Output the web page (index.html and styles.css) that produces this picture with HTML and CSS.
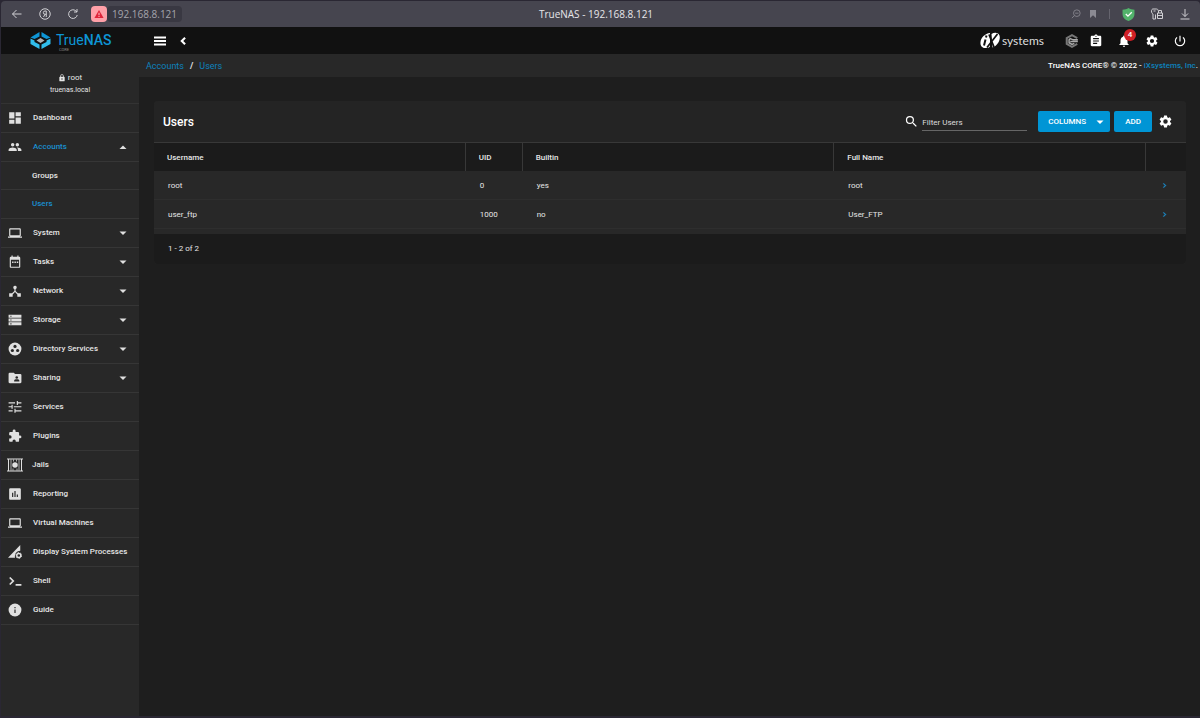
FILE: index.html
```html
<!DOCTYPE html>
<html lang="en">
<head>
<meta charset="utf-8">
<title>TrueNAS - 192.168.8.121</title>
<meta name="viewport" content="width=device-width, initial-scale=1">
<link rel="stylesheet" href="styles.css">
</head>
<body>
<svg class="defs" aria-hidden="true">
  <symbol id="gear" viewBox="0 0 24 24"><path d="M19.14 12.94c.04-.3.06-.61.06-.94 0-.32-.02-.64-.07-.94l2.03-1.58a.49.49 0 0 0 .12-.61l-1.92-3.32a.49.49 0 0 0-.59-.22l-2.39.96c-.5-.38-1.03-.7-1.62-.94l-.36-2.54a.48.48 0 0 0-.48-.41h-3.84c-.24 0-.43.17-.47.41l-.36 2.54c-.59.24-1.13.57-1.62.94l-2.39-.96a.48.48 0 0 0-.59.22L2.74 8.87c-.12.21-.08.47.12.61l2.03 1.58c-.05.3-.09.63-.09.94s.02.64.07.94l-2.03 1.58a.49.49 0 0 0-.12.61l1.92 3.32c.12.22.37.29.59.22l2.39-.96c.5.38 1.03.7 1.62.94l.36 2.54c.05.24.24.41.48.41h3.84c.24 0 .44-.17.47-.41l.36-2.54c.59-.24 1.13-.56 1.62-.94l2.39.96c.22.08.47 0 .59-.22l1.92-3.32a.49.49 0 0 0-.12-.61l-2.01-1.58zM12 15.6A3.6 3.6 0 1 1 12 8.400a3.600 3.600 0 0 1 0 7.200z"/></symbol>
  <symbol id="laptop" viewBox="0 0 24 24"><path d="M20 18c1.100 0 2-.9 2-2V6c0-1.100-.9-2-2-2H4c-1.100 0-2 .9-2 2v10c0 1.100.9 2 2 2H0v2h24v-2h-4zM4 6h16v10H4V6z"/></symbol>
  <symbol id="down" viewBox="0 0 24 24"><path d="M5 9l7 7 7-7z"/></symbol>
  <symbol id="up" viewBox="0 0 24 24"><path d="M5 16l7-7 7 7z"/></symbol>
  <symbol id="right" viewBox="0 0 24 24"><path d="M10 6L8.590 7.410 13.170 12l-4.580 4.590L10 18l6-6z"/></symbol>
</svg>
<div class="window">
  <header class="browser">
    <div class="browser-nav">
      <button class="bare" aria-label="Back"><svg class="ic line" viewBox="0 0 24 24"><path d="M21 12H3m8-8l-8 8 8 8"/></svg></button>
      <button class="bare" aria-label="Home"><svg class="ic line" viewBox="0 0 24 24"><circle cx="12" cy="12" r="10.500"/><path d="M14.500 18V6h-2.500a3.300 3.300 0 0 0 0 6.600h2.500M12 12.600L9 18"/></svg></button>
      <button class="bare" aria-label="Reload"><svg class="ic line" viewBox="0 0 24 24"><path d="M20.500 14a8.700 8.700 0 1 1-3-8.500L20 8M20 2v6h-6"/></svg></button>
      <div class="address">
        <span class="warn"><svg viewBox="0 0 24 24"><path fill="#e0243a" d="M12 2.500L23 21.500H1z"/><path stroke="#ffc4c8" stroke-width="2.400" d="M12 9v6m0 1.800v2.400"/></svg></span>
        <span class="url">192.168.8.121</span>
      </div>
    </div>
    <div class="page-title">TrueNAS - 192.168.8.121</div>
    <div class="browser-tools">
      <svg class="small line dim" viewBox="0 0 24 24"><circle cx="14" cy="10" r="8"/><path d="M8 16l-6 6M10 10h8"/></svg>
      <svg class="small dim" viewBox="0 0 24 24"><path d="M3 0h18v24l-9-8-9 8z"/></svg>
      <span class="sep"></span>
      <svg class="shield" viewBox="0 0 24 24"><path fill="#52b36b" d="M12 0c3 2 7 3 11 3v8c0 7-5 11-11 13C6 22 1 18 1 11V3c4 0 8-1 11-3z"/><path fill="none" stroke="#fff" stroke-width="2.500" d="M7 11l4 4 7-7"/></svg>
      <svg class="ic line" viewBox="0 0 24 24"><path d="M4 22V12C2 11 1 9 1 6c0-2 1-4 3-4h7c2 0 3 1 3 3M4 22h5v-9M5 6h4"/><path d="M13 10h10v11H13zM15 10V5h6v5M13 15h10"/></svg>
      <svg class="ic line" viewBox="0 0 24 24"><path d="M12 2v15m-6-6l6 6 6-6M3 22h18"/></svg>
    </div>
  </header>

  <div class="topbar">
    <a class="logo" href="#" aria-label="TrueNAS CORE">
      <svg class="logo-mark" viewBox="0 0 42 34"><path fill="#0e95d5" d="M19 0v9L9 14 1 11zM23 0v9l10 5 8-3z"/><path fill="#31beec" d="M1 13l8 4v3l10 5v9L1 24zM41 13l-8 4v3l-10 5v9l18-10z"/><path fill="#aeb1b3" d="M21 12l8 5-8 5-8-5z"/></svg>
      <span class="logo-text"><span class="brand">True<b>NAS</b></span><small>CORE</small></span>
    </a>
    <button class="bare menu" aria-label="Menu"><svg class="ic" viewBox="0 0 24 20"><path d="M0 1h24v4H0zM0 8h24v4H0zM0 15h24v4H0z"/></svg></button>
    <button class="bare" aria-label="Collapse"><svg class="chev" viewBox="0 0 24 24"><path d="M17 4l-8 8 8 8"/></svg></button>
    <div class="top-actions">
      <a class="ix" href="#" aria-label="iXsystems"><svg class="ix-mark" viewBox="0 0 40 34"><path fill="#fff" d="M19 2C9 3 1 11 0 20c-1 8 4 13 12 12 3 0 5-1 7-3zM22 4c6-4 14-3 16 3 3 9-5 21-14 24z"/><path fill="none" stroke="#111" stroke-width="3.500" d="M17 5l10 25M34 4L13 31"/><path fill="none" stroke="#111" stroke-width="4" d="M10 15L7 27M12 7l-1 4"/></svg><span>systems</span></a>
      <svg class="truecommand" viewBox="0 0 24 24"><path fill="none" stroke="#777" stroke-width="3.500" d="M21 7l-9-5-9 5v10l9 5 9-5"/><path fill="none" stroke="#aaa" stroke-width="2.500" d="M22 10h-8l-5-2-2 2v5l5 3 4-2M9 13h13"/></svg>
      <button class="bare" aria-label="Tasks"><svg class="act" viewBox="0 0 24 24"><path d="M19 3h-4.180C14.400 1.840 13.300 1 12 1s-2.400.84-2.820 2H5c-1.100 0-2 .9-2 2v14c0 1.100.9 2 2 2h14c1.100 0 2-.9 2-2V5c0-1.100-.9-2-2-2zm-7 0a1 1 0 1 1 0 2 1 1 0 0 1 0-2zm2 14H7v-2h7v2zm3-4H7v-2h10v2zm0-4H7V7h10v2z"/></svg></button>
      <button class="bare bell" aria-label="Alerts"><svg class="act" viewBox="0 0 24 24"><path d="M12 22a2 2 0 0 0 2-2h-4a2 2 0 0 0 2 2zm6-6v-5c0-3.070-1.640-5.640-4.500-6.320V4a1.500 1.500 0 0 0-3 0v.68C7.630 5.360 6 7.920 6 11v5l-2 2v1h16v-1l-2-2z"/></svg><span class="badge">4</span></button>
      <button class="bare" aria-label="Settings"><svg class="act"><use href="#gear"/></svg></button>
      <button class="bare" aria-label="Power"><svg class="act" viewBox="0 0 24 24"><path d="M13 3h-2v10h2V3zm4.830 2.170l-1.420 1.420A6.920 6.920 0 0 1 19 12a7 7 0 1 1-11.420-5.420L6.170 5.170A8.930 8.930 0 0 0 3 12a9 9 0 1 0 18 0c0-2.740-1.230-5.180-3.170-6.830z"/></svg></button>
    </div>
  </div>

  <div class="body">
    <aside class="sidebar">
      <div class="profile">
        <div class="who"><svg viewBox="0 0 24 24"><path d="M18 8h-1V6A5 5 0 0 0 7 6v2H6c-1.100 0-2 .9-2 2v10c0 1.100.9 2 2 2h12c1.100 0 2-.9 2-2V10c0-1.100-.9-2-2-2zm-6 9a2 2 0 1 1 0-4 2 2 0 0 1 0 4zm3-9H9V6a3 3 0 0 1 6 0v2z"/></svg><span>root</span></div>
        <div class="host">truenas.local</div>
      </div>
      <nav>
        <a href="#" class="item"><svg viewBox="0 0 24 24"><path d="M2 13h9V2H2v11zm0 9h9v-7H2v7zm11 0h9V11h-9v11zm0-20v7h9V2h-9z"/></svg><span>Dashboard</span></a>
        <a href="#" class="item active"><svg viewBox="0 0 24 24"><path d="M16 11a3 3 0 1 0 0-6 3 3 0 0 0 0 6zm-8 0a3 3 0 1 0 0-6 3 3 0 0 0 0 6zm0 2c-2.330 0-7 1.170-7 3.500V19h14v-2.500c0-2.330-4.670-3.500-7-3.500zm8 0c-.29 0-.62.02-.97.05 1.160.84 1.970 1.970 1.970 3.450V19h6v-2.500c0-2.330-4.670-3.500-7-3.500z"/></svg><span>Accounts</span><svg class="caret"><use href="#up"/></svg></a>
        <a href="#" class="item sub first">Groups</a>
        <a href="#" class="item sub active">Users</a>
        <a href="#" class="item"><svg><use href="#laptop"/></svg><span>System</span><svg class="caret"><use href="#down"/></svg></a>
        <a href="#" class="item"><svg viewBox="0 0 24 24"><path d="M19 3h-1V1h-2v2H8V1H6v2H5a2 2 0 0 0-2 2v15c0 1.100.9 2 2 2h14c1.100 0 2-.9 2-2V5c0-1.100-.9-2-2-2zm0 17H5V8h14v12zM7 11h2.500v2.500H7zm4 0h2.500v2.500H11zm4 0h2.500v2.500H15z"/></svg><span>Tasks</span><svg class="caret"><use href="#down"/></svg></a>
        <a href="#" class="item"><svg viewBox="0 0 24 24"><path d="M17 16l-4-4V8.820A3 3 0 1 0 9 6c0 1.300.84 2.400 2 2.820V12l-4 4H2v6h6v-4l4-4.200 4 4.200v4h6v-6h-5z"/></svg><span>Network</span><svg class="caret"><use href="#down"/></svg></a>
        <a href="#" class="item"><svg viewBox="0 0 24 24"><path d="M1 3h22v5H1zM1 9.500h22v5H1zM1 16h22v5H1z"/><path fill="#282828" d="M4 4.500h2v2H4zM4 11h2v2H4zM4 17.500h2v2H4z"/></svg><span>Storage</span><svg class="caret"><use href="#down"/></svg></a>
        <a href="#" class="item"><svg viewBox="0 0 24 24"><circle cx="12" cy="12" r="11"/><g fill="#282828"><circle cx="12" cy="7.500" r="2.700"/><circle cx="7.500" cy="14.500" r="2.700"/><circle cx="16.500" cy="14.500" r="2.700"/></g></svg><span>Directory Services</span><svg class="caret"><use href="#down"/></svg></a>
        <a href="#" class="item"><svg viewBox="0 0 24 24"><path d="M21 5h-9l-2-2H3a2 2 0 0 0-2 2v14c0 1.100.9 2 2 2h18c1.100 0 2-.9 2-2V7a2 2 0 0 0-2-2z"/><g fill="#282828"><circle cx="15" cy="11" r="2.200"/><path d="M10.500 18v-1.500c0-3 9-3 9 0V18z"/></g></svg><span>Sharing</span><svg class="caret"><use href="#down"/></svg></a>
        <a href="#" class="item"><svg viewBox="0 0 24 24"><path d="M1 17.500v2h7v-2H1zM1 4v2h11V4H1zm12 18v-2.500h10v-2H13V15h-2v7h2zM6 8v2.500H1v2h5V15h2V8H6zm17 4.500v-2H10v2h13zM15 8.500h2V6h6V4h-6V1.500h-2v7z"/></svg><span>Services</span></a>
        <a href="#" class="item"><svg viewBox="0 0 24 24"><path d="M20.500 11H19V7a2 2 0 0 0-2-2h-4V3.500a2.500 2.500 0 0 0-5 0V5H4a2 2 0 0 0-2 2v3.800h1.500a2.700 2.700 0 0 1 0 5.400H2V20c0 1.100.9 2 2 2h3.800v-1.500a2.700 2.700 0 0 1 5.400 0V22H17a2 2 0 0 0 2-2v-4h1.500a2.500 2.500 0 0 0 0-5z"/></svg><span>Plugins</span></a>
        <a href="#" class="item wide"><svg viewBox="0 0 32 28"><path fill="none" stroke="#e0e0e0" stroke-width="2" d="M0 2h32M0 26h32M3 2v24M29 2v24"/><path fill="none" stroke="#a8a8a8" stroke-width="2" d="M8 2v24M24 2v24M13 2v5M19 2v5M12 26v-5M20 26v-5"/><circle cx="16" cy="14" r="5.500"/></svg><span>Jails</span></a>
        <a href="#" class="item"><svg viewBox="0 0 24 24"><path d="M20 2H4a2 2 0 0 0-2 2v16c0 1.100.9 2 2 2h16c1.100 0 2-.9 2-2V4a2 2 0 0 0-2-2zM9 17H7v-7h2v7zm4 0h-2V7h2v10zm4 0h-2v-4h2v4z"/></svg><span>Reporting</span></a>
        <a href="#" class="item"><svg><use href="#laptop"/></svg><span>Virtual Machines</span></a>
        <a href="#" class="item"><svg viewBox="0 0 24 24"><path d="M0 22L21 0v10c-6 0-10 5-9 12z"/><circle cx="18.500" cy="18" r="3.500" fill="none" stroke="#e0e0e0" stroke-width="2.500"/><circle cx="18.500" cy="18" r="5" fill="none" stroke="#e0e0e0" stroke-width="1.500" stroke-dasharray="2.600 2.600"/></svg><span>Display System Processes</span></a>
        <a href="#" class="item"><svg viewBox="0 0 24 24"><path fill="none" stroke="#e0e0e0" stroke-width="3" d="M3 6l6 6-6 6M13 18.500h10"/></svg><span>Shell</span></a>
        <a href="#" class="item"><svg viewBox="0 0 24 24"><circle cx="12" cy="12" r="11"/><path fill="#282828" d="M11 11h2v6h-2zM11 7h2v2h-2z"/></svg><span>Guide</span></a>
      </nav>
    </aside>

    <main class="content">
      <div class="crumbbar">
        <div class="crumbs"><a href="#">Accounts</a><b>/</b><a href="#">Users</a></div>
        <div class="copyright">TrueNAS CORE® © 2022 - <a href="#">iXsystems, Inc</a>.</div>
      </div>
      <section class="card">
        <div class="card-head">
          <h1>Users</h1>
          <label class="filter"><svg viewBox="0 0 24 24"><path d="M15.500 14h-.79l-.28-.27A6.470 6.470 0 0 0 16 9.500 6.500 6.500 0 1 0 9.500 16c1.610 0 3.090-.59 4.230-1.570l.27.28v.79l5 4.990L20.490 19l-4.990-5zm-6 0a4.500 4.500 0 1 1 0-9 4.500 4.500 0 0 1 0 9z"/></svg><input type="text" placeholder="Filter Users" aria-label="Filter Users"></label>
          <button class="btn columns">COLUMNS<svg><use href="#down"/></svg></button>
          <button class="btn add">ADD</button>
          <button class="bare" aria-label="Table settings"><svg class="cog"><use href="#gear"/></svg></button>
        </div>
        <table>
          <colgroup><col><col class="c-uid"><col><col><col class="c-go"></colgroup>
          <thead><tr><th>Username</th><th>UID</th><th>Builtin</th><th>Full Name</th><th></th></tr></thead>
          <tbody>
            <tr><td>root</td><td>0</td><td>yes</td><td>root</td><td><button class="bare" aria-label="Expand root"><svg class="go"><use href="#right"/></svg></button></td></tr>
            <tr><td>user_ftp</td><td>1000</td><td>no</td><td>User_FTP</td><td><button class="bare" aria-label="Expand user_ftp"><svg class="go"><use href="#right"/></svg></button></td></tr>
          </tbody>
        </table>
        <div class="card-foot">1 - 2 of 2</div>
      </section>
    </main>
  </div>
</div>
</body>
</html>
```
FILE: styles.css
```css
* { box-sizing: border-box; }
body { margin: 0; background: #2a2733; color: #e6e6e6; font: 500 8px/12px Roboto, "Liberation Sans", sans-serif; }
a { color: inherit; text-decoration: none; }
svg { display: block; flex: none; fill: currentColor; }
.defs { position: absolute; width: 0; height: 0; }
.bare { display: flex; padding: 0; border: 0; background: none; color: inherit; }
.window { display: flex; flex-direction: column; min-height: 100vh; padding: 1px 0 2px 1px; }

.browser { display: grid; grid-template-columns: 1fr auto 1fr; align-items: center; height: 26px; padding: 0 9px 0 0; background: #46454f; border-radius: 4px 4px 0 0; color: #d0d0d4; font: 400 10px/14px "Open Sans", "Noto Sans", sans-serif; }
.browser-nav { display: flex; align-items: center; gap: 16px; padding-left: 10px; }
.ic { width: 12px; height: 12px; }
svg.line { fill: none; stroke: currentColor; stroke-width: 2; }
.address { display: flex; align-items: center; margin-left: -4px; color: #a5a4ac; }
.warn { display: grid; place-items: center; width: 16px; height: 16px; border-radius: 4px; background: #ffa0a8; }
.warn svg { width: 10px; height: 10px; }
.url { padding: 1px 5px; border-radius: 4px; background: #393842; }
.page-title { color: #e6e6ea; }
.browser-tools { display: flex; align-items: center; justify-content: flex-end; gap: 16px; }
.small { width: 10px; height: 10px; }
.small + .small { width: 8px; margin-left: -8px; }
.dim { color: #8b8a93; }
.sep { width: 1px; height: 10px; margin: 0 -4px; background: #65646e; }
.shield { width: 13px; height: 13px; }

.topbar { display: flex; align-items: center; height: 27px; padding-right: 13px; background: #111; color: #fff; }
.logo { display: flex; align-items: center; gap: 5px; width: 138px; margin-right: 15px; padding-left: 29px; color: #0e95d5; }
.logo-mark { width: 21px; height: 17px; }
.logo-text { display: flex; flex-direction: column; padding-top: 3px; }
.brand { font: 400 14px/15px Roboto, sans-serif; }
.brand b { font-weight: 500; }
.logo-text small { padding-left: 3px; color: #888; font: 400 4px/4px Roboto, sans-serif; }
.menu { margin-right: 12px; }
.menu .ic { height: 10px; }
.chev { width: 10px; height: 10px; fill: none; stroke: currentColor; stroke-width: 5; }
.top-actions { display: flex; align-items: center; gap: 14px; margin-left: auto; }
.act { width: 14px; height: 14px; }
.truecommand { width: 14px; height: 14px; margin: 0 -4px 0 7px; }
.ix { display: flex; align-items: center; gap: 1px; font: 400 12px/16px Lato, sans-serif; color: #ddd; }
.ix-mark { width: 21px; height: 17px; }
.bell { position: relative; }
.badge { position: absolute; top: -5px; right: -5px; width: 12px; height: 12px; border-radius: 6px; background: #d12026; color: #fff; font: 500 8px/12px Roboto, sans-serif; text-align: center; }

.body { display: flex; flex: 1; background: #1e1e1e; }
.sidebar { width: 138px; flex: none; background: #282828; }
.profile { height: 50px; padding-top: 18px; border-bottom: 1px solid #333; text-align: center; font-weight: 400; }
.who { display: flex; align-items: center; justify-content: center; gap: 2px; font-size: 8px; }
.who svg { width: 8px; height: 8px; }
.host { font-size: 7px; }
.item { display: flex; align-items: center; height: 29px; padding: 0 10px 0 7px; border-bottom: 1px solid #363636; }
.item > svg { width: 14px; height: 14px; margin-right: 11px; color: #e0e0e0; }
.item > .caret { width: 12px; height: 12px; margin: 0 0 0 auto; }
.item.wide > svg { width: 16px; margin: 0 9px 0 6px; }
.item.wide { padding-left: 0; }
.item.sub { padding-left: 31px; }
.item.first { height: 28px; }
.item.active { color: #1a8fd0; }

.content { flex: 1; min-width: 0; }
.crumbbar { display: flex; align-items: center; justify-content: space-between; height: 23px; padding: 0 2px 0 7px; background: #282828; }
.crumbs { display: flex; gap: 6px; font-size: 9px; font-weight: 400; }
.crumbs a, .copyright a { color: #0d82bd; }
.copyright { color: #fff; }
.card { margin: 24px 14px 0 15px; border-radius: 4px; overflow: hidden; background: #282828; }
.card-head { display: flex; align-items: center; height: 42px; padding: 0 13px 0 9px; background: #242424; color: #fff; border-bottom: 1px solid #383838; }
.card h1 { flex: 1; margin: 0; font: 500 12px/16px Roboto, sans-serif; }
.filter { display: flex; align-items: center; gap: 3px; margin-right: 11px; }
.filter svg { width: 15px; height: 15px; }
.filter input { width: 105px; height: 19px; padding: 2px 0 0; border: 0; border-bottom: 1px solid #666; background: none; color: #fff; font: 400 8px/12px Roboto, sans-serif; }
.filter input::placeholder { color: #ddd; opacity: 1; }
.btn { display: flex; align-items: center; justify-content: center; height: 21px; border: 0; border-radius: 2px; background: #0095d5; color: #fff; font: 500 8px/12px Roboto, sans-serif; }
.columns { gap: 8px; padding: 0 4px 0 10px; margin-right: 4px; }
.columns svg { width: 12px; height: 12px; }
.add { width: 38px; margin-right: 6px; }
.cog { width: 15px; height: 15px; }
table { width: 100%; border-collapse: separate; border-spacing: 0; table-layout: fixed; }
.c-uid { width: 57px; }
.c-go { width: 40px; }
th { height: 28px; padding: 1px 13px 0; background: #1b1b1b; text-align: left; font-weight: 500; border-right: 1px solid #383838; }
th:last-child { border-right: 0; }
td { height: 29px; padding: 2px 14px 0; font-weight: 400; border-bottom: 1px solid #2e2e2e; }
td:last-child { padding-top: 0; }
.go { width: 9px; height: 9px; color: #1a8fd0; stroke: currentColor; stroke-width: 1; }
.card-foot { margin-top: 5px; padding: 9px 14px; background: #1b1b1b; font-weight: 400; }
```
